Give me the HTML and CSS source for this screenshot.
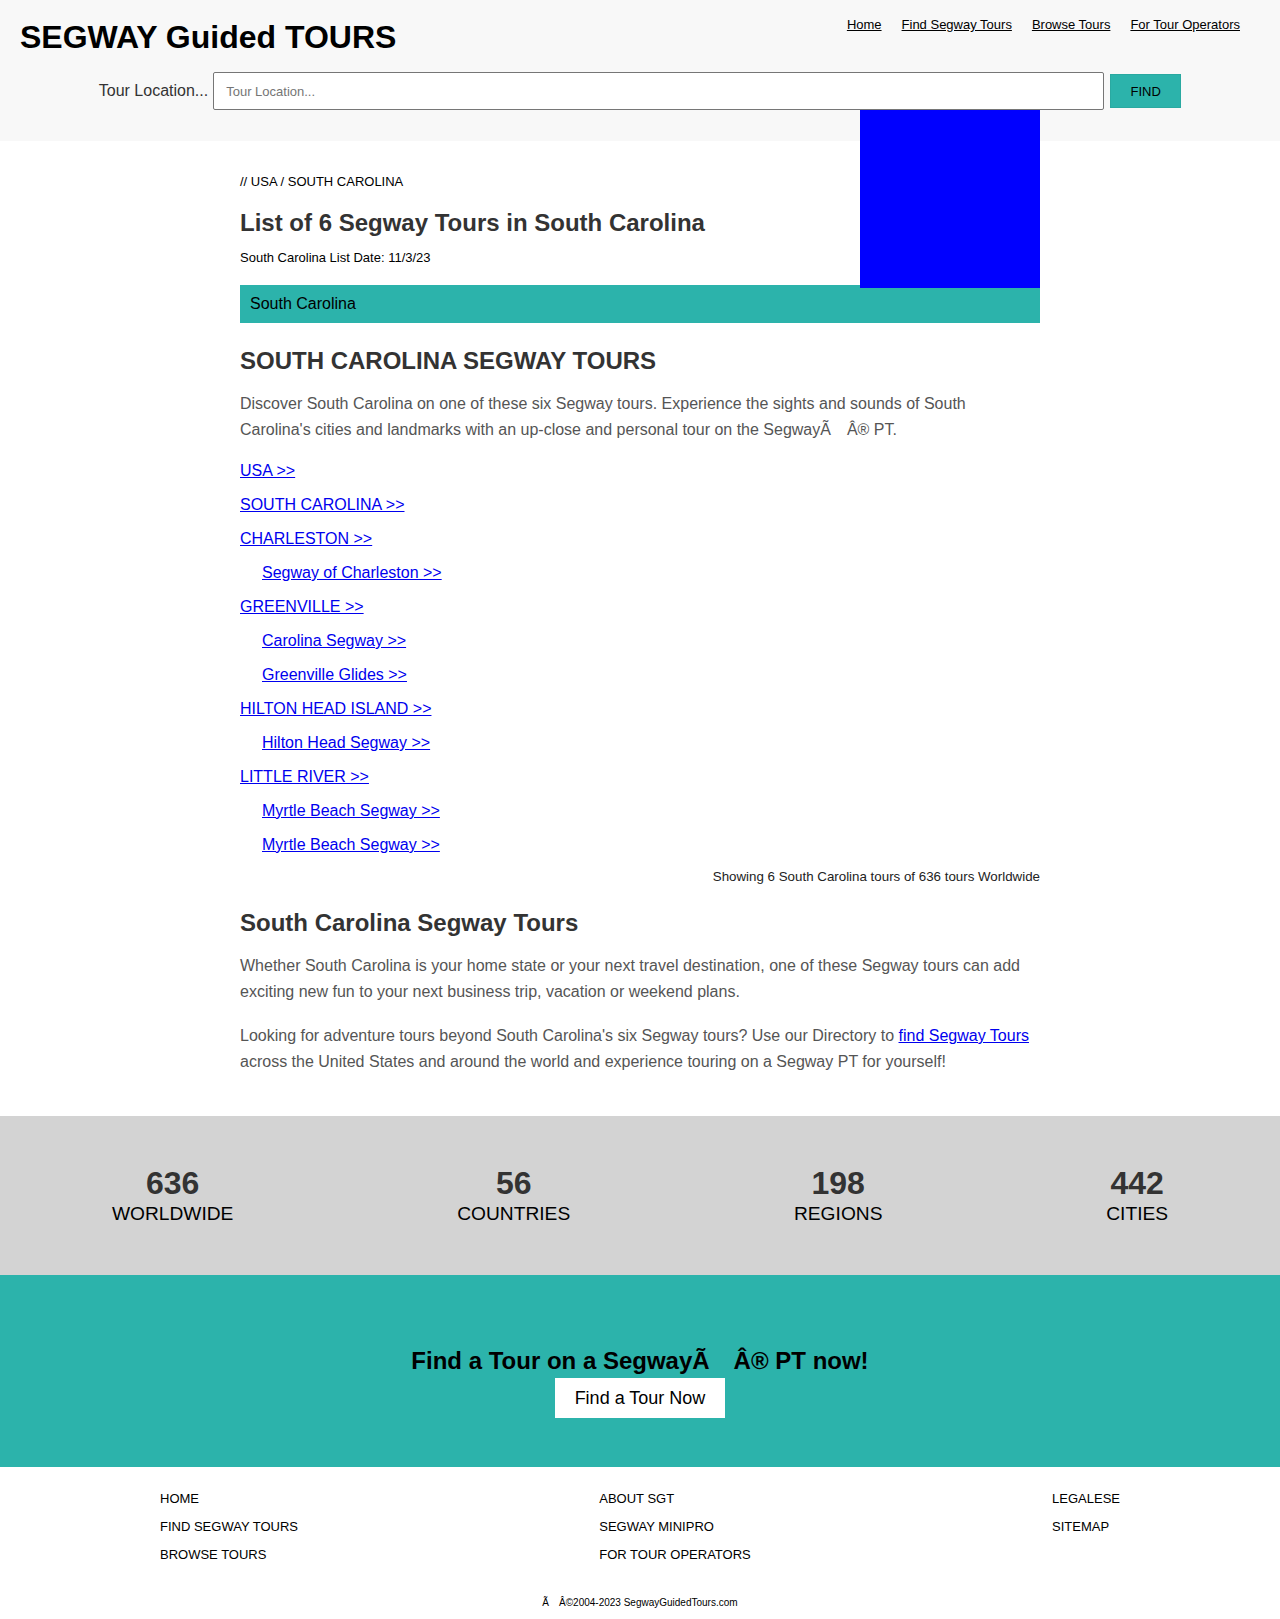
FILE: index.html
```html
<!DOCTYPE html>
<html lang="en">
<head>
<meta charset="utf-8">
<title>South Carolina Segway Tours</title>
<link rel="stylesheet" href="styles.css">
</head>
<body>
<header class="site-header">
  <div class="top-row">
    <div class="brand">SEGWAY Guided TOURS</div>
    <nav class="top-nav">
      <a href="#">Home</a>
      <a href="#">Find Segway Tours</a>
      <a href="#">Browse Tours</a>
      <a href="#">For Tour Operators</a>
    </nav>
  </div>
  <form class="search-row">
    <label class="search-label" for="loc">Tour Location...</label>
    <input class="search-input" id="loc" type="text" placeholder="Tour Location...">
    <button class="search-btn" type="button">FIND</button>
  </form>
</header>

<main class="content">
  <div class="ad-box"></div>
  <div class="breadcrumb"><a href="#">//</a> <a href="#">USA</a> / <a href="#">SOUTH CAROLINA</a></div>
  <h1 class="page-title">List of 6 Segway Tours in South Carolina</h1>
  <div class="list-date">South Carolina List Date: 11/3/23</div>
  <div class="region-bar">South Carolina</div>

  <h2 class="section-title upper">SOUTH CAROLINA SEGWAY TOURS</h2>
  <p class="body-text">Discover South Carolina on one of these six Segway tours. Experience the sights and sounds of South Carolina's cities and landmarks with an up-close and personal tour on the SegwayÃ&emsp;Â® PT.</p>

  <ul class="tour-links">
    <li><a href="#">USA &gt;&gt;</a></li>
    <li><a href="#">SOUTH CAROLINA &gt;&gt;</a></li>
    <li><a href="#">CHARLESTON &gt;&gt;</a></li>
    <li class="sub"><a href="#">Segway of Charleston &gt;&gt;</a></li>
    <li><a href="#">GREENVILLE &gt;&gt;</a></li>
    <li class="sub"><a href="#">Carolina Segway &gt;&gt;</a></li>
    <li class="sub"><a href="#">Greenville Glides &gt;&gt;</a></li>
    <li><a href="#">HILTON HEAD ISLAND &gt;&gt;</a></li>
    <li class="sub"><a href="#">Hilton Head Segway &gt;&gt;</a></li>
    <li><a href="#">LITTLE RIVER &gt;&gt;</a></li>
    <li class="sub"><a href="#">Myrtle Beach Segway &gt;&gt;</a></li>
    <li class="sub"><a href="#">Myrtle Beach Segway &gt;&gt;</a></li>
  </ul>

  <div class="showing">Showing 6 South Carolina tours of 636 tours Worldwide</div>

  <h2 class="section-title second">South Carolina Segway Tours</h2>
  <p class="body-text">Whether South Carolina is your home state or your next travel destination, one of these Segway tours can add exciting new fun to your next business trip, vacation or weekend plans.</p>
  <p class="body-text second-p">Looking for adventure tours beyond South Carolina's six Segway tours? Use our Directory to <a href="#">find Segway Tours</a> across the United States and around the world and experience touring on a Segway PT for yourself!</p>
</main>

<section class="stats">
  <div class="stat"><div class="stat-num">636</div><div class="stat-label">WORLDWIDE</div></div>
  <div class="stat"><div class="stat-num">56</div><div class="stat-label">COUNTRIES</div></div>
  <div class="stat"><div class="stat-num">198</div><div class="stat-label">REGIONS</div></div>
  <div class="stat"><div class="stat-num">442</div><div class="stat-label">CITIES</div></div>
</section>

<section class="cta">
  <div class="cta-title">Find a Tour on a SegwayÃ&emsp;Â® PT now!</div>
  <a class="cta-btn" href="#">Find a Tour Now</a>
</section>

<footer class="site-footer">
  <div class="footer-cols">
    <ul class="footer-col">
      <li><a href="#">HOME</a></li>
      <li><a href="#">FIND SEGWAY TOURS</a></li>
      <li><a href="#">BROWSE TOURS</a></li>
    </ul>
    <ul class="footer-col">
      <li><a href="#">ABOUT SGT</a></li>
      <li><a href="#">SEGWAY MINIPRO</a></li>
      <li><a href="#">FOR TOUR OPERATORS</a></li>
    </ul>
    <ul class="footer-col">
      <li><a href="#">LEGALESE</a></li>
      <li><a href="#">SITEMAP</a></li>
    </ul>
  </div>
  <div class="copyright">Ã&emsp;Â©2004-2023 SegwayGuidedTours.com</div>
</footer>
</body>
</html>
```
FILE: styles.css
```css
* { box-sizing: border-box; }

body {
  margin: 0;
  font-family: "Liberation Sans", Arial, Helvetica, sans-serif;
  color: #000;
  background: #fff;
}

a { color: inherit; }

/* Header */
.site-header {
  background: #f8f8f8;
  padding: 19px 0 31px;
}

.top-row {
  display: flex;
  justify-content: space-between;
  align-items: flex-start;
  padding: 0 40px 0 20px;
}

.brand {
  font-size: 32px;
  font-weight: bold;
  line-height: 37px;
  color: #000;
}

.top-nav {
  display: flex;
  gap: 20px;
  margin-top: -2px;
  font-size: 13px;
  line-height: 15px;
}

.top-nav a {
  color: #000;
  text-decoration: underline;
}

.search-row {
  margin: 16px 0 0;
  display: flex;
  justify-content: center;
  align-items: center;
}

.search-label {
  font-size: 16px;
  color: #333;
  margin-right: 5px;
}

.search-input {
  width: 891px;
  height: 38px;
  border: 1px solid #767676;
  border-radius: 2px;
  padding: 0 12px;
  font-family: inherit;
  font-size: 13px;
  background: #fff;
  margin: 0;
}

.search-input::placeholder { color: #757575; }

.search-btn {
  width: 71px;
  height: 34px;
  margin-left: 6px;
  background: #2cb3ab;
  border: 1px solid #2aa9a1;
  color: #000;
  font-family: inherit;
  font-size: 13px;
  padding: 0;
}

/* Main content */
.content {
  position: relative;
  width: 800px;
  margin: 0 auto;
  padding: 33px 0 41px;
}

.ad-box {
  position: absolute;
  top: -31px;
  right: 0;
  width: 180px;
  height: 178px;
  background: #0000ff;
}

.breadcrumb {
  font-size: 13px;
  line-height: 15px;
  color: #000;
}

.breadcrumb a { text-decoration: none; color: #000; }

.page-title {
  margin: 20px 0 0;
  font-size: 24px;
  line-height: 28px;
  font-weight: bold;
  color: #333;
}

.list-date {
  margin-top: 13px;
  font-size: 13px;
  line-height: 15px;
}

.region-bar {
  margin-top: 20px;
  height: 38px;
  background: #2cb3ab;
  padding: 0 10px;
  display: flex;
  align-items: center;
  font-size: 16px;
  color: #000;
}

.section-title {
  margin: 24px 0 0;
  font-size: 24px;
  line-height: 28px;
  font-weight: bold;
  color: #333;
}

.section-title.second { margin-top: 25px; }

.body-text {
  margin: 16px 0 0;
  font-size: 16px;
  line-height: 26px;
  color: #555;
}

.body-text.second-p { margin-top: 18px; }

.body-text a { color: #0000ee; }

.tour-links {
  list-style: none;
  margin: 19px 0 0;
  padding: 0;
  display: flex;
  flex-direction: column;
  gap: 16px;
}

.tour-links li {
  font-size: 16px;
  line-height: 18px;
}

.tour-links li.sub { padding-left: 22px; }

.tour-links a { color: #0000ee; }

.showing {
  margin-top: 15px;
  text-align: right;
  font-size: 13.33px;
  line-height: 15px;
  color: #222;
}

/* Stats */
.stats {
  background: #d3d3d3;
  display: flex;
  justify-content: space-around;
  padding: 49px 0 50px;
}

.stat { text-align: center; }

.stat-num {
  font-size: 32px;
  line-height: 37px;
  font-weight: bold;
  color: #333;
}

.stat-label {
  font-size: 19.2px;
  line-height: 23px;
  color: #000;
}

/* CTA */
.cta {
  background: #2cb3ab;
  padding: 72px 0 49px;
  display: flex;
  flex-direction: column;
  align-items: center;
}

.cta-title {
  font-size: 24px;
  line-height: 28px;
  font-weight: bold;
  color: #000;
}

.cta-btn {
  margin-top: 3px;
  height: 40px;
  padding: 0 20px;
  background: #fff;
  color: #000;
  text-decoration: none;
  font-size: 18px;
  display: flex;
  align-items: center;
}

/* Footer */
.site-footer {
  padding: 18px 0 8px;
}

.footer-cols {
  width: 960px;
  margin: 0 auto;
  display: flex;
  justify-content: space-between;
  align-items: flex-start;
}

.footer-col {
  list-style: none;
  margin: 0;
  padding: 0;
}

.footer-col li {
  font-size: 13px;
  line-height: 28px;
}

.footer-col a {
  color: #000;
  text-decoration: none;
}

.copyright {
  margin-top: 28px;
  text-align: center;
  font-size: 10px;
  line-height: 12px;
  color: #000;
}
```
